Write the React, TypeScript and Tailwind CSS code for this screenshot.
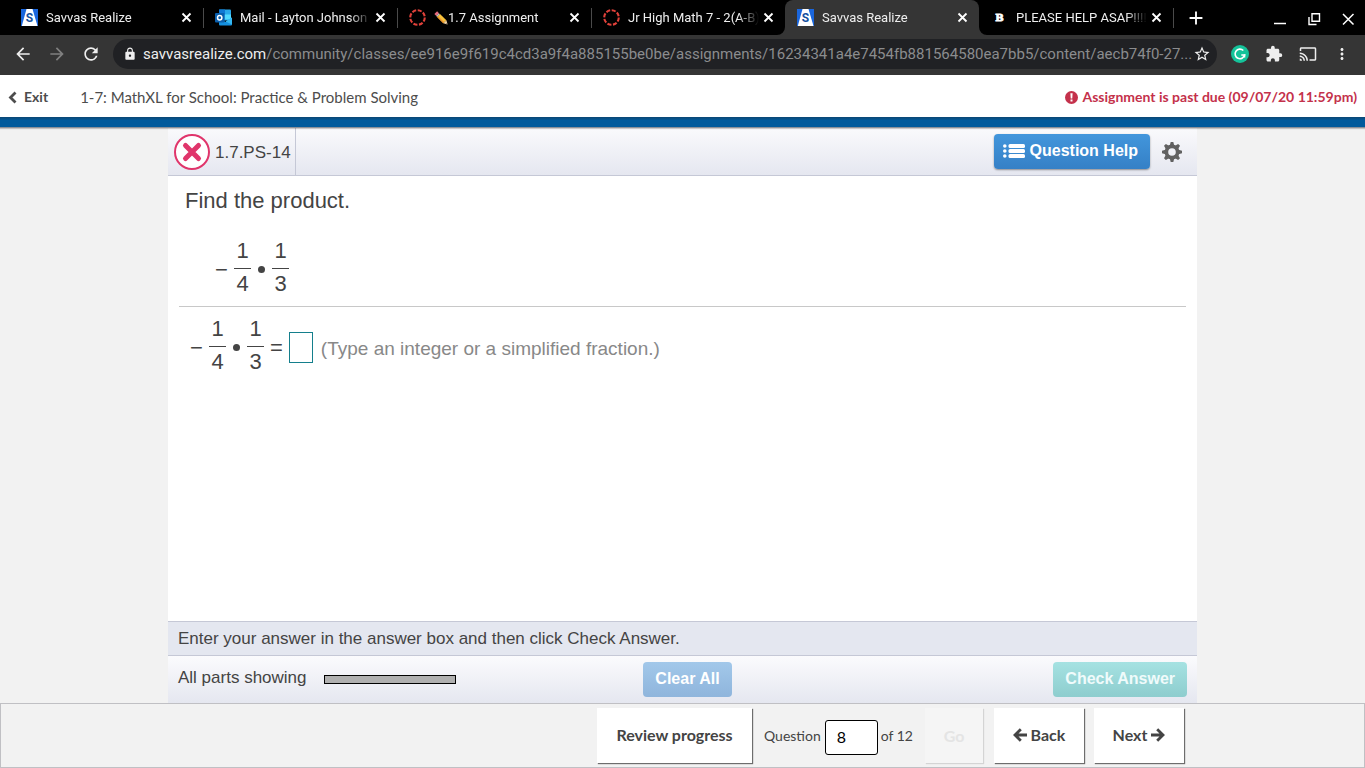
import type { ReactNode } from "react";
import { clsx } from "clsx";
import {
  MdArrowBack,
  MdArrowForward,
  MdCast,
  MdExtension,
  MdLock,
  MdMoreVert,
  MdRefresh,
  MdStarBorder,
  MdAdd,
} from "react-icons/md";

function SavvasIcon() {
  return (
    <svg viewBox="0 0 17 17" className="w-[17px] h-[17px] shrink-0">
      <rect width="17" height="17" fill="#1a66dc" />
      <path d="M5.500 0h6l5 17H.8z" fill="#fff" />
      <text x="8.400" y="13" textAnchor="middle" fontSize="12" fontWeight="bold" fontFamily="Roboto, sans-serif" fill="#15509f">
        S
      </text>
    </svg>
  );
}

function OutlookIcon() {
  return (
    <svg viewBox="0 0 17 17" className="w-[17px] h-[17px] shrink-0">
      <rect x="4" y="0.5" width="12" height="11" rx="1" fill="#28a8ea" />
      <path d="M4 .5h6v5H4z" fill="#0f78d4" />
      <path d="M10 5.500h6v5h-6z" fill="#50d9ff" />
      <path d="M4 9l6.500 4L17 8.500V15.500a1 1 0 0 1-1 1H5a1 1 0 0 1-1-1z" fill="#1490df" />
      <path d="M17 8.500V15.500l-6.500-3z" fill="#35b8f1" />
      <rect y="4" width="9.500" height="9.500" rx="1" fill="#0a5fad" />
      <circle cx="4.700" cy="8.700" r="2.200" fill="none" stroke="#fff" strokeWidth="1.500" />
    </svg>
  );
}

function CanvasIcon() {
  return (
    <svg viewBox="0 0 18 18" className="w-[17px] h-[17px] shrink-0">
      <circle cx="9" cy="9" r="7.700" fill="none" stroke="#e0413a" strokeWidth="2.200" strokeDasharray="4.400 1.648" />
    </svg>
  );
}

function BrainlyIcon() {
  return (
    <svg viewBox="0 0 17 17" className="w-[17px] h-[17px] shrink-0">
      <text x="8.500" y="12" textAnchor="middle" fontSize="10" fontWeight="bold" fontFamily="DejaVu Serif, serif" fill="#fff" stroke="#fff" strokeWidth="0.800">
        B
      </text>
    </svg>
  );
}

function PencilIcon() {
  return (
    <svg viewBox="0 0 14 14" className="w-[14px] h-[14px] shrink-0">
      <path d="M.4 3L3.100.3l1.900 1.900-2.700 2.700z" fill="#ea6a7c" />
      <path d="M2.200 4.900l2.700-2.700 1 1-2.700 2.700z" fill="#b8c4cc" />
      <path d="M3.100 5.900L6 3l6.400 6.200-3.100 3.100z" fill="#f9c23c" />
      <path d="M3.100 5.900l.9-.9 6.300 6.300-1 1z" fill="#e8912d" />
      <path d="M9.300 12.300l3.100-3.100 1.200 4.400z" fill="#f3d2a2" />
      <path d="M12 13.100l1-1 .6 1.500z" fill="#444" />
    </svg>
  );
}

function TabCloseIcon() {
  return (
    <svg viewBox="0 0 15 15" className="w-[15px] h-[15px]">
      <path d="M3.500 3.500l8 8M11.500 3.500l-8 8" stroke="currentColor" strokeWidth="1.800" />
    </svg>
  );
}

function GrammarlyIcon() {
  return (
    <svg viewBox="0 0 18 18" className="w-[18px] h-[18px]">
      <circle cx="9" cy="9" r="9" fill="#15c39a" />
      <path d="M12.300 5.500A4.800 4.800 0 1 0 13.600 10H10.300" fill="none" stroke="#fff" strokeWidth="1.600" />
      <path d="M13.600 9.300v3.200" stroke="#fff" strokeWidth="1.400" />
    </svg>
  );
}

function WrongIcon() {
  return (
    <svg viewBox="0 0 36 36" className="w-9 h-9 shrink-0" role="img" aria-label="Incorrect">
      <circle cx="18" cy="18" r="17" fill="#fff" stroke="#e0356b" strokeWidth="2" />
      <path d="M11.500 11.500l13 13M24.500 11.500l-13 13" stroke="#e0356b" strokeWidth="5" strokeLinecap="round" />
    </svg>
  );
}

function ListIcon() {
  return (
    <svg viewBox="0 0 22 14" className="w-[22px] h-[14px]" fill="#fff">
      <circle cx="1.800" cy="2" r="1.800" />
      <circle cx="1.800" cy="7" r="1.800" />
      <circle cx="1.800" cy="12" r="1.800" />
      <rect x="5.500" y="0" width="16.500" height="4" rx="1.500" />
      <rect x="5.500" y="5" width="16.500" height="4" rx="1.500" />
      <rect x="5.500" y="10" width="16.500" height="4" rx="1.500" />
    </svg>
  );
}

const TEETH = [0, 45, 90, 135, 180, 225, 270, 315];

function GearIcon() {
  return (
    <svg viewBox="-10 -10 20 20" className="w-5 h-5">
      <circle r="5.600" fill="none" stroke="#616161" strokeWidth="3.600" />
      {TEETH.map((a) => (
        <path key={a} d="M-2.200 -6.500L-1.300 -10H1.300L2.200 -6.500z" fill="#616161" transform={`rotate(${a})`} />
      ))}
    </svg>
  );
}

function ChevronIcon() {
  return (
    <svg viewBox="0 0 9 13" className="w-[9px] h-[13px] shrink-0">
      <path d="M7.500 1.500L2.500 6.500l5 5" fill="none" stroke="currentColor" strokeWidth="2.800" />
    </svg>
  );
}

function AlertIcon() {
  return (
    <svg viewBox="0 0 13 13" className="w-[13px] h-[13px] shrink-0">
      <circle cx="6.500" cy="6.500" r="6.500" fill="currentColor" />
      <path d="M5.400 2.200h2.200l-.3 5.200H5.700z" fill="#fff" />
      <rect x="5.500" y="8.500" width="2" height="2" fill="#fff" />
    </svg>
  );
}

function ArrowIcon({ flip }: { flip?: boolean }) {
  return (
    <svg viewBox="0 0 14 14" className={clsx("w-[14px] h-[14px] shrink-0", flip && "rotate-180")}>
      <path d="M7.800 1.200L2 7l5.800 5.800M2.500 7H14" fill="none" stroke="currentColor" strokeWidth="2.800" />
    </svg>
  );
}

interface TabProps {
  icon: ReactNode;
  title: string;
  active?: boolean;
  emoji?: boolean;
  divider?: boolean;
}

const TABS: TabProps[] = [
  { icon: <SavvasIcon />, title: "Savvas Realize", divider: true },
  { icon: <OutlookIcon />, title: "Mail - Layton Johnson", divider: true },
  { icon: <CanvasIcon />, title: "1.7 Assignment", emoji: true, divider: true },
  { icon: <CanvasIcon />, title: "Jr High Math 7 - 2(A-B)" },
  { icon: <SavvasIcon />, title: "Savvas Realize", active: true },
  { icon: <BrainlyIcon />, title: "PLEASE HELP ASAP!!!!", divider: true },
];

function Tab({ icon, title, active, emoji, divider }: TabProps) {
  return (
    <div
      className={clsx(
        "relative flex items-center h-[35px] min-w-0 flex-1 max-w-[194px] pl-3 pr-[9px]",
        active && "bg-[#353535] rounded-t-lg",
      )}
    >
      {icon}
      <div className="flex items-center min-w-0 flex-1 ml-2 mr-[2px] h-5 overflow-hidden text-[13px] text-[#eeeeee] whitespace-nowrap [mask-image:linear-gradient(to_right,black_84%,transparent)]">
        {emoji && <PencilIcon />}
        <span>{title}</span>
      </div>
      <button type="button" aria-label="Close tab" className="text-white shrink-0">
        <TabCloseIcon />
      </button>
      {divider && <span className="absolute -right-px top-2 w-px h-5 bg-[#4a4a4a]" />}
      {active && (
        <>
          <svg viewBox="0 0 8 8" className="absolute -left-2 bottom-0 w-2 h-2">
            <path d="M8 0v8H0a8 8 0 0 0 8-8z" fill="#353535" />
          </svg>
          <svg viewBox="0 0 8 8" className="absolute -right-2 bottom-0 w-2 h-2">
            <path d="M0 0v8h8a8 8 0 0 1-8-8z" fill="#353535" />
          </svg>
        </>
      )}
    </div>
  );
}

function BrowserBar() {
  return (
    <div className="font-[Roboto,sans-serif]">
      <div className="flex bg-black h-[35px] pl-[9px] text-white">
        {TABS.map((tab, i) => (
          <Tab key={i} {...tab} />
        ))}
        <button type="button" aria-label="New tab" className="ml-3 mr-auto">
          <MdAdd size={22} />
        </button>
        <div className="flex items-center gap-5 pr-[10px] pt-[2px] shrink-0">
          <button type="button" aria-label="Minimize">
            <svg viewBox="0 0 14 14" className="w-[14px] h-[14px]">
              <path d="M1 11.500h12" stroke="#fff" strokeWidth="1.500" />
            </svg>
          </button>
          <button type="button" aria-label="Restore">
            <svg viewBox="0 0 14 14" className="w-[14px] h-[14px]" fill="none" stroke="#fff" strokeWidth="1.400">
              <path d="M5 1.700h7.500v7.500H5z" />
              <path d="M2 5v7.500h7.500" />
            </svg>
          </button>
          <button type="button" aria-label="Close">
            <svg viewBox="0 0 14 14" className="w-[14px] h-[14px]">
              <path d="M2 2l10.500 10.500M12.500 2L2 12.500" stroke="#fff" strokeWidth="1.500" />
            </svg>
          </button>
        </div>
      </div>

      <div className="flex items-center h-10 bg-[#353535] pl-[13px] pr-[14px] pb-[2px] text-[#eeeeee]">
        <button type="button" aria-label="Back" className="mr-[14px]">
          <MdArrowBack size={20} />
        </button>
        <button type="button" aria-label="Forward" className="mr-[14px] text-[#808080]">
          <MdArrowForward size={20} />
        </button>
        <button type="button" aria-label="Reload" className="mr-3">
          <MdRefresh size={20} />
        </button>
        <div className="flex items-center flex-1 min-w-0 h-[30px] rounded-full bg-[#202124] pl-[10px] pr-[6px]">
          <MdLock size={14} className="shrink-0 mr-[6px]" />
          <p className="flex-1 min-w-0 truncate text-[15px] text-[#8b8c8e]">
            <span className="text-[#eeeeee]">savvasrealize.com</span>
            /community/classes/ee916e9f619c4cd3a9f4a885155be0be/assignments/16234341a4e7454fb881564580ea7bb5/content/aecb74f0-27...
          </p>
          <button type="button" aria-label="Bookmark">
            <MdStarBorder size={18} />
          </button>
        </div>
        <div className="flex items-center gap-4 ml-[14px]">
          <GrammarlyIcon />
          <MdExtension size={18} />
          <MdCast size={18} />
          <MdMoreVert size={18} />
        </div>
      </div>
    </div>
  );
}

function Fraction({ top, bottom }: { top: string; bottom: string }) {
  return (
    <span className="inline-flex flex-col w-[17px] text-center">
      <span className="h-8 leading-7 border-b border-[#444444]">{top}</span>
      <span className="h-8 leading-[30px]">{bottom}</span>
    </span>
  );
}

function Product() {
  return (
    <span className="inline-flex items-center">
      <span className="w-[13px] mr-[6px]">−</span>
      <Fraction top="1" bottom="4" />
      <span className="w-[7px] h-[7px] rounded-full bg-[#444444] mx-[7px]" />
      <Fraction top="1" bottom="3" />
    </span>
  );
}

function Exercise() {
  return (
    <main className="flex flex-col flex-1 w-full max-w-[1029px] mx-auto bg-white font-['Liberation_Sans',Arial,sans-serif] text-[#444444]">
      <div className="flex items-center h-12 pl-[6px] pr-[15px] border-b border-[#c5c8d6] bg-linear-to-b from-[#fafafc] to-[#e5e7f0]">
        <div className="flex items-center gap-[5px] h-full pr-1 border-r border-[#c5c8d6]">
          <WrongIcon />
          <h1 className="pt-[2px] text-[17px]">1.7.PS-14</h1>
        </div>
        <button
          type="button"
          className="flex items-center gap-[5px] ml-auto h-[35px] px-3 pl-[9px] pb-[2px] rounded-sm bg-linear-to-b from-[#4296dc] to-[#3580c6] text-white text-base font-bold shadow-[0_1px_2px_rgba(0,0,0,0.4)]"
        >
          <ListIcon />
          Question Help
        </button>
        <button type="button" aria-label="Settings" className="ml-3">
          <GearIcon />
        </button>
      </div>

      <div className="flex-1 px-[11px] text-[22px]">
        <p className="pt-[9px] pl-[6px] leading-8">Find the product.</p>
        <div className="flex pt-5 pb-[5px] pl-9 border-b border-[#c8c8c8]">
          <Product />
        </div>
        <div className="flex items-center pt-2 pl-[11px]">
          <Product />
          <span className="mx-[6px]">=</span>
          <input
            aria-label="Answer"
            className="w-6 h-[31px] border border-[#147f8c] bg-white text-center outline-none"
          />
          <span className="ml-2 pt-1 text-[19px] text-[#888888]">(Type an integer or a simplified fraction.)</span>
        </div>
      </div>

      <p className="h-[34px] leading-[34px] px-[10px] border-t border-[#c5c8d6] bg-[#e4e7f0] text-[17px]">
        Enter your answer in the answer box and then click Check Answer.
      </p>
      <div className="flex items-center h-12 px-[10px] border-t border-[#c5c8d6] bg-linear-to-b from-[#fbfbfd] to-[#e5e7f0] text-[17px]">
        <span className="flex-1 flex items-center gap-[17px]">
          <span className="pb-[3px]">All parts showing</span>
          <span className="w-[132px] h-[9px] border border-black bg-[#b0b0b0]" />
        </span>
        <button
          type="button"
          className="h-[35px] ml-[10px] px-3 pb-[2px] rounded-sm bg-linear-to-b from-[#a2c8ea] to-[#8fb5dc] text-white text-base font-bold"
        >
          Clear All
        </button>
        <span className="flex-1 flex justify-end">
          <button
            type="button"
            className="h-[35px] px-3 pb-[2px] rounded-sm bg-linear-to-b from-[#a5e2e2] to-[#8ecdce] text-[#f0fbfb] text-base font-bold"
          >
            Check Answer
          </button>
        </span>
      </div>
    </main>
  );
}

const navButton =
  "flex items-center justify-center gap-1 h-[55px] pb-[2px] bg-white font-bold text-[#444444] shadow-[1px_1px_1px_rgba(0,0,0,0.55)]";

function QuestionNav() {
  return (
    <footer className="h-[65px] border border-[#c0c0c4] bg-[#f2f2f2] pt-1">
      <div className="flex items-center justify-end w-full max-w-[1029px] mx-auto pr-[13px] text-base">
        <button type="button" className={clsx(navButton, "w-[155px] mr-3")}>
          Review progress
        </button>
        <label htmlFor="question" className="text-sm text-[#444444]">
          Question
        </label>
        <input
          id="question"
          defaultValue="8"
          className="w-[53px] h-[35px] ml-1 mr-[3px] mt-[3px] pb-[2px] pl-[11px] rounded-[3px] border border-black bg-white text-base text-black outline-none"
        />
        <span className="text-sm text-[#444444]">of 12</span>
        <button
          type="button"
          disabled
          className="w-[58px] h-[55px] ml-3 bg-[#f5f5f5] font-bold text-[#e4e4e4] shadow-[1px_1px_1px_rgba(0,0,0,0.12)]"
        >
          Go
        </button>
        <button type="button" className={clsx(navButton, "w-[90px] ml-[11px]")}>
          <ArrowIcon />
          Back
        </button>
        <button type="button" className={clsx(navButton, "w-[90px] ml-[10px]")}>
          Next
          <ArrowIcon flip />
        </button>
      </div>
    </footer>
  );
}

export default function App() {
  return (
    <div className="flex flex-col min-h-screen bg-[#f2f2f2] font-[Lato,sans-serif]">
      <BrowserBar />
      <header className="flex items-center h-[42px] pt-[2px] px-2 bg-white text-[#4d4d4d]">
        <a href="#exit" className="flex items-center gap-[7px] text-sm font-bold">
          <ChevronIcon />
          Exit
        </a>
        <p className="ml-8 text-[15px]">1-7: MathXL for School: Practice &amp; Problem Solving</p>
        <p className="flex items-center gap-1 ml-auto text-sm font-bold text-[#c4314b]">
          <AlertIcon />
          Assignment is past due (09/07/20 11:59pm)
        </p>
      </header>
      <div className="relative h-[11px] bg-linear-to-b from-[#0b4673] from-0% via-[#005a9c] via-35% to-[#005a9c] border-b border-[#8a9099] shadow-[0_1px_1px_rgba(0,0,0,0.2)]" />
      <Exercise />
      <QuestionNav />
    </div>
  );
}
